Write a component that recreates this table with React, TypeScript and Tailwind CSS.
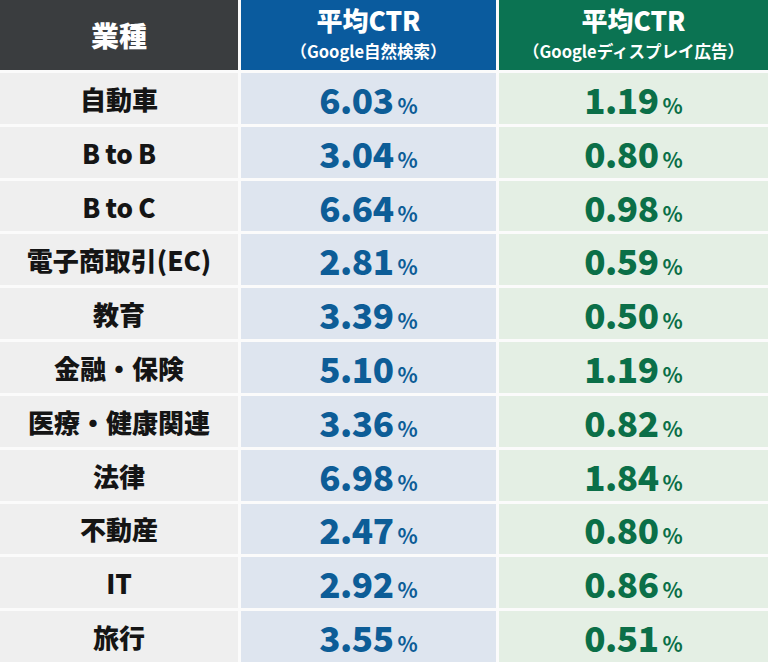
const rows = [
  { name: "自動車", organic: "6.03", display: "1.19" },
  { name: "B\u2009to\u2009B", organic: "3.04", display: "0.80" },
  { name: "B\u2009to\u2009C", organic: "6.64", display: "0.98" },
  { name: "電子商取引(EC)", organic: "2.81", display: "0.59" },
  { name: "教育", organic: "3.39", display: "0.50" },
  { name: "金融・保険", organic: "5.10", display: "1.19" },
  { name: "医療・健康関連", organic: "3.36", display: "0.82" },
  { name: "法律", organic: "6.98", display: "1.84" },
  { name: "不動産", organic: "2.47", display: "0.80" },
  { name: "IT", organic: "2.92", display: "0.86" },
  { name: "旅行", organic: "3.55", display: "0.51" },
]

function Rate({ value, color }: { value: string; color: string }) {
  return (
    <div className={`flex items-baseline justify-center font-black ${color}`}>
      <span className="text-[35px] leading-none tracking-[-0.5px]">{value}</span>
      <span className="ml-1 text-[21px] leading-none font-bold">%</span>
    </div>
  )
}

export default function App() {
  return (
    <div
      className="grid h-[662px] w-[768px] grid-cols-[238px_255px_1fr] grid-rows-[70px_repeat(11,1fr)] gap-[3px] bg-[#fbfbfb]"
      style={{ fontFamily: '"Noto Sans CJK JP", "Noto Sans", sans-serif' }}
    >
      <div className="flex items-center justify-center bg-[#3a3d3f] text-[28px] font-black text-white">
        業種
      </div>
      <div className="flex flex-col items-center justify-start pt-[1px] bg-[#0a5b9e] text-white">
        <span className="text-[26px] font-black leading-[38px]">平均CTR</span>
        <span className="text-[16.5px] font-bold leading-[24px]">（Google自然検索）</span>
      </div>
      <div className="flex flex-col items-center justify-start pt-[1px] bg-[#0b7352] text-white">
        <span className="text-[26px] font-black leading-[38px]">平均CTR</span>
        <span className="text-[16.5px] font-bold leading-[24px]">（Googleディスプレイ広告）</span>
      </div>

      {rows.map((r) => (
        <>
          <div
            key={r.name + "-n"}
            className="flex items-center justify-center bg-[#efefef] text-[26px] font-black text-[#151515]"
          >
            {r.name}
          </div>
          <div key={r.name + "-o"} className="flex items-center justify-center bg-[#dee5ef]">
            <Rate value={r.organic} color="text-[#0d5d97]" />
          </div>
          <div key={r.name + "-d"} className="flex items-center justify-center bg-[#e4efe4]">
            <Rate value={r.display} color="text-[#0b6f48]" />
          </div>
        </>
      ))}
    </div>
  )
}
